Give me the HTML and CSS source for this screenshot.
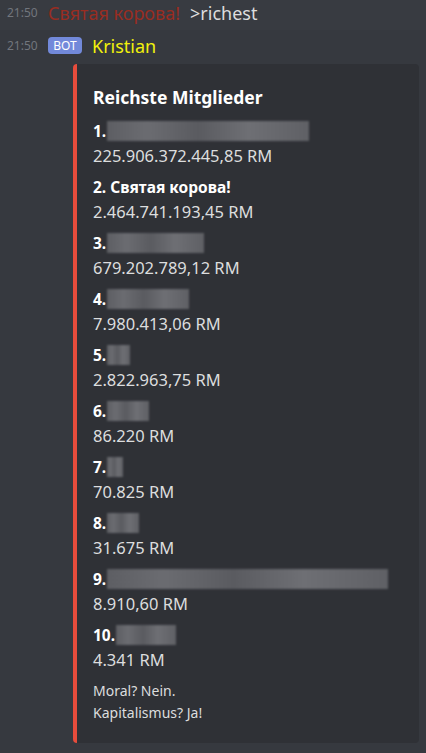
FILE: index.html
```html
<!DOCTYPE html>
<html lang="de">
<head>
    <meta charset="UTF-8">
    <meta name="viewport" content="width=device-width, initial-scale=1.0">
    <title>richest</title>
    <link rel="stylesheet" href="styles.css">
</head>
<body>

    <div class="msg msg-hover">
        <span class="time">21:50</span>
        <span class="author author-red">Святая корова!</span>
        <span class="text">&gt;richest</span>
    </div>

    <div class="msg msg-bot">
        <span class="time">21:50</span>
        <span class="badge">BOT</span>
        <span class="author author-yellow">Kristian</span>
    </div>

    <div class="embed">
        <div class="embed-title">Reichste Mitglieder</div>

        <div class="field">
            <div class="field-name">1. <span class="hidden-name" style="width:202px"></span></div>
            <div class="field-value">225.906.372.445,85 RM</div>
        </div>
        <div class="field">
            <div class="field-name">2. Святая корова!</div>
            <div class="field-value">2.464.741.193,45 RM</div>
        </div>
        <div class="field">
            <div class="field-name">3. <span class="hidden-name" style="width:97px"></span></div>
            <div class="field-value">679.202.789,12 RM</div>
        </div>
        <div class="field">
            <div class="field-name">4. <span class="hidden-name" style="width:82px"></span></div>
            <div class="field-value">7.980.413,06 RM</div>
        </div>
        <div class="field">
            <div class="field-name">5. <span class="hidden-name" style="width:23px"></span></div>
            <div class="field-value">2.822.963,75 RM</div>
        </div>
        <div class="field">
            <div class="field-name">6. <span class="hidden-name" style="width:42px"></span></div>
            <div class="field-value">86.220 RM</div>
        </div>
        <div class="field">
            <div class="field-name">7. <span class="hidden-name" style="width:16px"></span></div>
            <div class="field-value">70.825 RM</div>
        </div>
        <div class="field">
            <div class="field-name">8. <span class="hidden-name" style="width:32px"></span></div>
            <div class="field-value">31.675 RM</div>
        </div>
        <div class="field">
            <div class="field-name">9. <span class="hidden-name" style="width:281px"></span></div>
            <div class="field-value">8.910,60 RM</div>
        </div>
        <div class="field">
            <div class="field-name">10. <span class="hidden-name" style="width:60px"></span></div>
            <div class="field-value">4.341 RM</div>
        </div>

        <div class="embed-footer">
            Moral? Nein.<br>
            Kapitalismus? Ja!
        </div>
    </div>

</body>
</html>
```

FILE: styles.css
```css
body {
    margin: 0;
    background-color: #36393f;
    color: #dcddde;
    font-family: 'Noto Sans', 'Open Sans', sans-serif;
    height: 753px;
    overflow: hidden;
}

/* Nachrichtenzeilen */
.msg {
    display: flex;
    align-items: center;
    padding-left: 7px;
    height: 22px;
    line-height: 22px;
}
.msg-hover {
    background-color: #383b41;
    padding-top: 2px;
    padding-bottom: 6px;
}
.msg-bot {
    margin-top: 5px;
}
.time {
    width: 41px;
    font-size: 12px;
    color: #72767d;
}
.author {
    font-size: 18px;
    margin-right: 10px;
}
.author-red {
    color: #992d22;
}
.author-yellow {
    color: #f1f10c;
}
.text {
    font-size: 18px;
    color: #dcddde;
}
.badge {
    background-color: #7289da;
    color: #fff;
    font-size: 12px;
    line-height: 17px;
    height: 17px;
    width: 34px;
    text-align: center;
    border-radius: 4px;
    margin-right: 10px;
    margin-top: -1px;
}

/* Embed */
.embed {
    margin: 7px 0 0 73px;
    width: 310px;
    background-color: #2f3136;
    border-left: 4px solid #e74c3c;
    border-radius: 4px;
    padding: 21px 16px 19px 16px;
}
.embed-title {
    font-size: 17.5px;
    font-weight: bold;
    color: #fff;
    line-height: 24px;
    margin-bottom: 11px;
}
.field {
    margin-bottom: 9px;
}
.field-name {
    font-size: 15.5px;
    font-weight: bold;
    color: #fff;
    line-height: 22px;
    margin-bottom: 3px;
    display: flex;
    align-items: center;
    white-space: pre;
}
.field-value {
    font-size: 16.5px;
    line-height: 22px;
    color: #dcddde;
}
.hidden-name {
    display: inline-block;
    height: 20px;
    margin-left: -3px;
    background: linear-gradient(90deg, #5d5e63, #6b6c71 20%, #5a5b60 45%, #6e6f74 70%, #5f6065);
    filter: blur(1px);
}
.embed-footer {
    font-size: 14px;
    line-height: 22px;
    color: #dcddde;
}
```
